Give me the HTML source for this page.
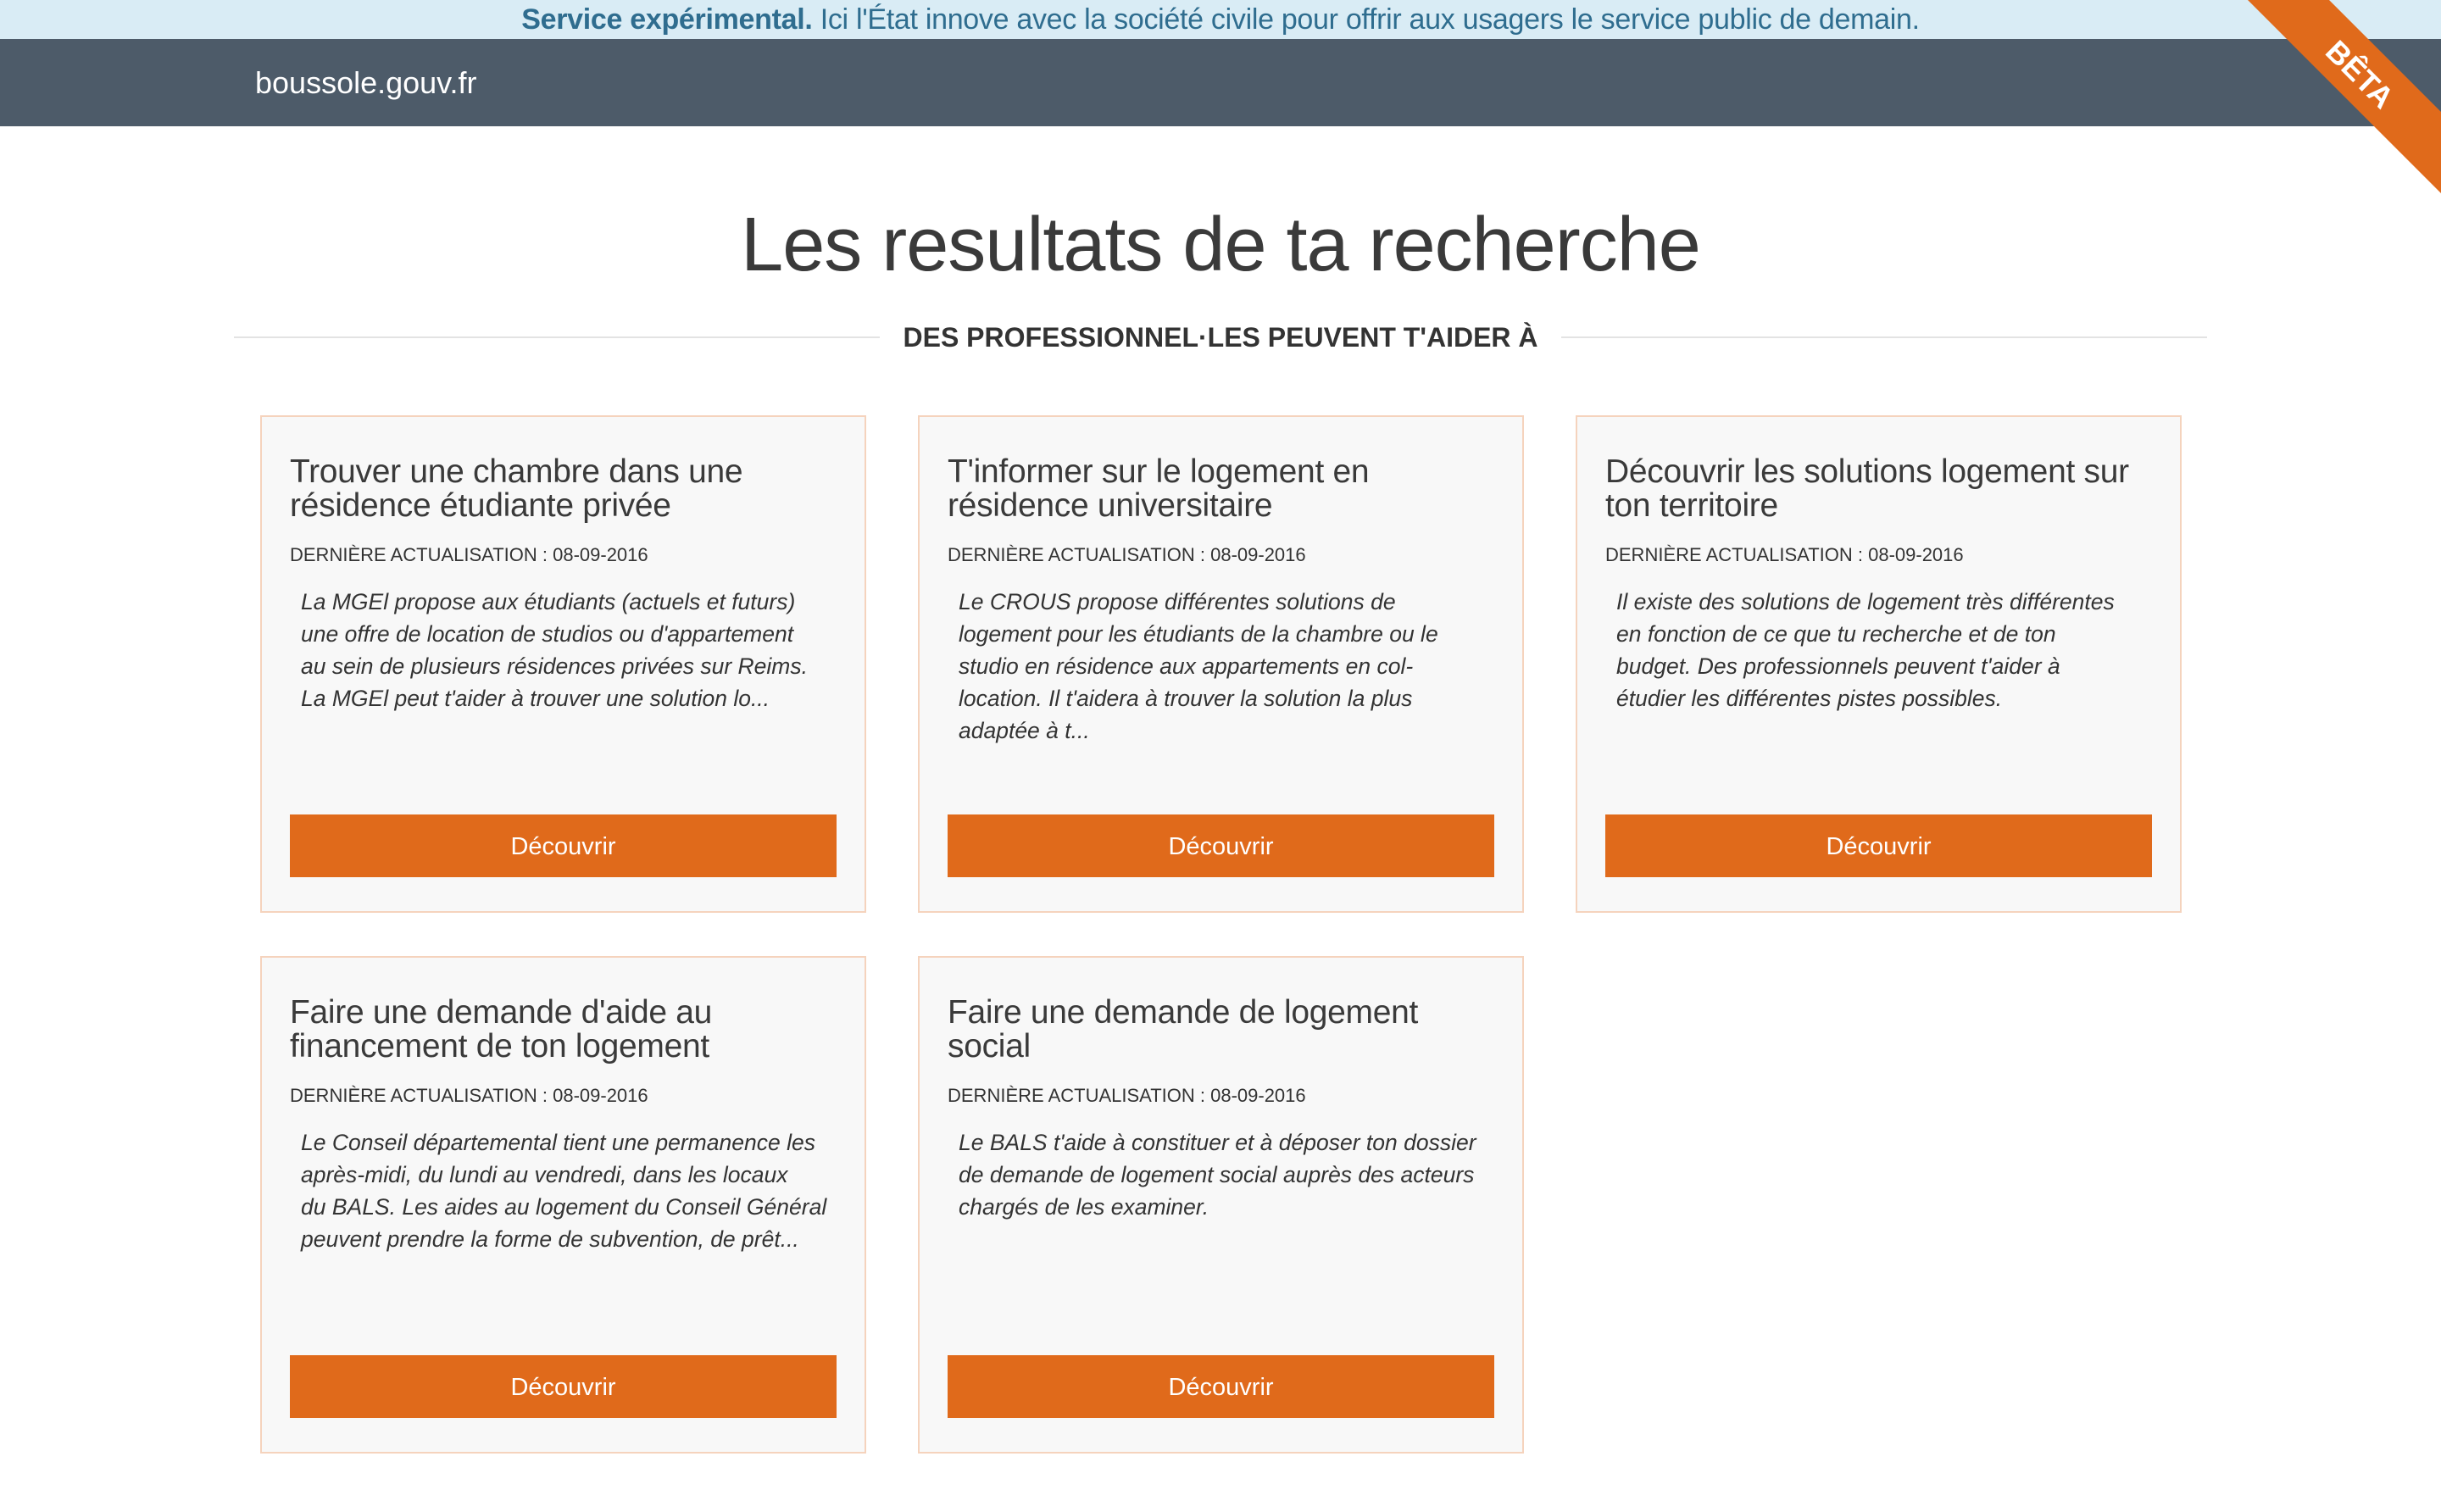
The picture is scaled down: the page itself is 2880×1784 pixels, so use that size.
<!DOCTYPE html>
<html><head><meta charset="utf-8">
<style>
*{margin:0;padding:0;box-sizing:border-box}
body{width:2880px;height:1784px;background:#fff;font-family:"Liberation Sans",sans-serif;position:relative;overflow:hidden;color:#333}
.banner{position:absolute;left:0;top:0;width:2880px;height:46px;background:#d9ecf5;color:#2f6d8f;font-size:34px;line-height:46px;text-align:center;letter-spacing:-0.3px;white-space:nowrap}
.banner b{font-weight:bold}
.header{position:absolute;left:0;top:46px;width:2880px;height:103px;background:#4d5b69}
.logo{position:absolute;left:301px;top:76px;color:#fff;font-size:36px;line-height:44px}
h1{position:absolute;left:0;width:2880px;top:234px;text-align:center;font-weight:normal;font-size:90px;line-height:110px;color:#3a3a3a;letter-spacing:-1px}
.sub{position:absolute;left:0;width:2880px;top:378px;text-align:center;font-weight:bold;font-size:32px;line-height:40px;color:#333}
.line{position:absolute;top:397px;height:2px;background:#e3e3e3}
.card{position:absolute;width:715px;height:587px;background:#f8f8f8;border:2px solid #f5d3bd}
.card h3{position:absolute;left:33px;top:45px;font-weight:normal;font-size:39px;line-height:40px;color:#3a3a3a;letter-spacing:-0.3px}
.card .meta{position:absolute;left:33px;top:149px;font-size:22px;line-height:28px;color:#333}
.card p{position:absolute;left:46px;top:199px;font-style:italic;font-size:26.5px;line-height:38px;color:#333}
.card .btn{position:absolute;left:33px;top:469px;width:645px;height:74px;background:#e06a1b;color:#fff;font-size:29px;line-height:76px;text-align:center}
</style></head><body>
<div class="banner"><b>Service expérimental.</b> Ici l'État innove avec la société civile pour offrir aux usagers le service public de demain.</div>
<div class="header"></div>
<div class="logo">boussole.gouv.fr</div>
<svg style="position:absolute;left:0;top:0" width="2880" height="260">
<polygon points="2652,0 2748,0 2880,132 2880,228" fill="#e06a1b"/>
<text x="2784" y="100" transform="rotate(45 2784 88)" fill="#fff" font-family="Liberation Sans" font-weight="bold" font-size="36" text-anchor="middle">BÊTA</text>
</svg>
<h1>Les resultats de ta recherche</h1>
<div class="line" style="left:276px;width:762px"></div>
<div class="line" style="left:1842px;width:762px"></div>
<div class="sub">DES PROFESSIONNEL·LES PEUVENT T'AIDER À</div>

<div class="card" style="left:307px;top:490px">
<h3>Trouver une chambre dans une<br>résidence étudiante privée</h3>
<div class="meta">DERNIÈRE ACTUALISATION : 08-09-2016</div>
<p>La MGEl propose aux étudiants (actuels et futurs)<br>une offre de location de studios ou d'appartement<br>au sein de plusieurs résidences privées sur Reims.<br>La MGEl peut t'aider à trouver une solution lo...</p>
<div class="btn">Découvrir</div>
</div>
<div class="card" style="left:1083px;top:490px">
<h3>T'informer sur le logement en<br>résidence universitaire</h3>
<div class="meta">DERNIÈRE ACTUALISATION : 08-09-2016</div>
<p>Le CROUS propose différentes solutions de<br>logement pour les étudiants de la chambre ou le<br>studio en résidence aux appartements en col-<br>location. Il t'aidera à trouver la solution la plus<br>adaptée à t...</p>
<div class="btn">Découvrir</div>
</div>
<div class="card" style="left:1859px;top:490px">
<h3>Découvrir les solutions logement sur<br>ton territoire</h3>
<div class="meta">DERNIÈRE ACTUALISATION : 08-09-2016</div>
<p>Il existe des solutions de logement très différentes<br>en fonction de ce que tu recherche et de ton<br>budget. Des professionnels peuvent t'aider à<br>étudier les différentes pistes possibles.</p>
<div class="btn">Découvrir</div>
</div>
<div class="card" style="left:307px;top:1128px">
<h3>Faire une demande d'aide au<br>financement de ton logement</h3>
<div class="meta">DERNIÈRE ACTUALISATION : 08-09-2016</div>
<p>Le Conseil départemental tient une permanence les<br>après-midi, du lundi au vendredi, dans les locaux<br>du BALS. Les aides au logement du Conseil Général<br>peuvent prendre la forme de subvention, de prêt...</p>
<div class="btn">Découvrir</div>
</div>
<div class="card" style="left:1083px;top:1128px">
<h3>Faire une demande de logement<br>social</h3>
<div class="meta">DERNIÈRE ACTUALISATION : 08-09-2016</div>
<p>Le BALS t'aide à constituer et à déposer ton dossier<br>de demande de logement social auprès des acteurs<br>chargés de les examiner.</p>
<div class="btn">Découvrir</div>
</div>
</body></html>
